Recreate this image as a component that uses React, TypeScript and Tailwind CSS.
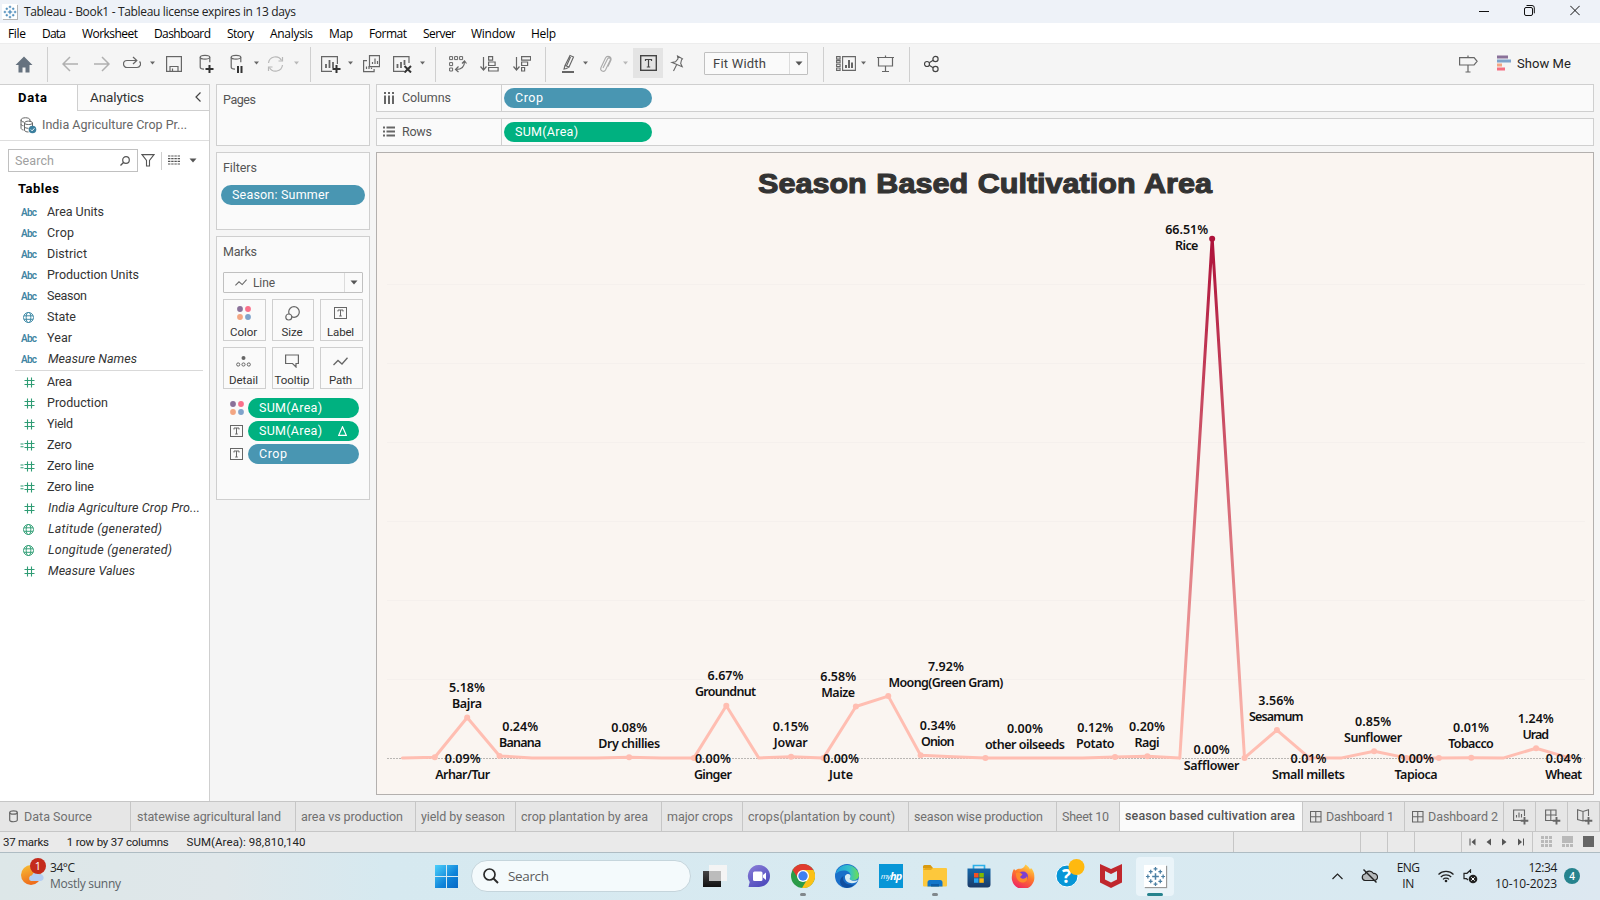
import { useLayoutEffect, useRef, useState, type ReactNode } from "react";

/* Single-line text tracked so that it spans an exact width. */
function Fit({ w, children, className = "" }: { w: number; children: string; className?: string }) {
  const ref = useRef<HTMLSpanElement>(null);
  const [tracking, setTracking] = useState(0);
  useLayoutEffect(() => {
    const el = ref.current;
    if (!el) return;
    el.style.letterSpacing = "0px";
    const natural = el.getBoundingClientRect().width;
    const next = (w - natural) / Math.max(1, children.length - 1);
    el.style.letterSpacing = next + "px";
    setTracking(next);
  }, [w, children]);
  return (
    <span ref={ref} className={"block w-max shrink-0 whitespace-nowrap " + className} style={{ letterSpacing: tracking }}>
      {children}
    </span>
  );
}

function Svg({ w, h = 19, className = "", children }: { w: number; h?: number; className?: string; children: ReactNode }) {
  return (
    <svg width={w} height={h} viewBox={`0 0 ${w} ${h}`} fill="none" stroke="#666" strokeWidth={1.2} className={"block shrink-0 " + className}>
      {children}
    </svg>
  );
}

const Caret = ({ className = "", fill = "#666" }: { className?: string; fill?: string }) => (
  <Svg w={5} h={4} className={className}>
    <path d="M0 0.5h5L2.5 3.5z" fill={fill} stroke="none" />
  </Svg>
);
const BigCaret = ({ className = "" }: { className?: string }) => (
  <Svg w={8} h={5} className={className}>
    <path d="M0.5 0.5h7L4 4.5z" fill="#555" stroke="none" />
  </Svg>
);
const Sep = ({ className = "" }: { className?: string }) => <div className={"mt-[3px] h-[35px] w-px shrink-0 bg-[#cfcfcf] " + className} />;

function TableauMark({ size, color = "#4a87b5" }: { size: number; color?: string }) {
  return (
    <svg width={size} height={size} viewBox="0 0 22 22" fill="none" stroke={color} strokeWidth="1.3" className="block">
      <path d="M11 7.5v7M7.500 11h7" strokeWidth="1.600" />
      <path d="M11 1v4M9 3h4M11 17v4M9 19h4M3 9v4M1 11h4M19 9v4M17 11h4" />
      <path d="M6 4v4M4 6h4M16 4v4M14 6h4M6 14v4M4 16h4M16 14v4M14 16h4" />
    </svg>
  );
}

function TitleBar() {
  return (
    <div className="flex h-[23px] shrink-0 items-center bg-[#eef2f8]">
      <div className="ml-[2px] flex h-[15px] w-[15px] items-center justify-center bg-white shadow-[1px_1px_0_#b5b5b5]">
        <TableauMark size={14} color="#2f78b0" />
      </div>
      <Fit w={272} className="mt-px ml-[7px] font-[Open_Sans,sans-serif] text-[12px] leading-[14px] text-[#222]">
        Tableau - Book1 - Tableau license expires in 13 days
      </Fit>
      <div className="ml-auto flex pr-[20px] pb-[2px]">
        <Svg w={10} h={11} className="mr-[35px]"><path d="M0 6.500h10" stroke="#111" strokeWidth="1" /></Svg>
        <Svg w={11} h={11} className="mr-[35px]">
          <rect x="0.500" y="2.500" width="8" height="8" rx="1.500" stroke="#111" strokeWidth="1" />
          <path d="M2.500 0.500h5.500a2.300 2.300 0 0 1 2.300 2.300v5.500" stroke="#111" strokeWidth="1" />
        </Svg>
        <Svg w={10} h={11}><path d="M0.300 0.800l9.400 9.400M9.700 0.800L0.300 10.200" stroke="#111" strokeWidth="1" /></Svg>
      </div>
    </div>
  );
}

const MENU: [string, number, string][] = [
  ["File", 18, "w-[34px]"], ["Data", 24, "w-[40px]"], ["Worksheet", 56, "w-[72px]"], ["Dashboard", 57, "w-[73px]"],
  ["Story", 27, "w-[43px]"], ["Analysis", 43, "w-[59px]"], ["Map", 24, "w-[40px]"], ["Format", 38, "w-[54px]"],
  ["Server", 33, "w-[48px]"], ["Window", 44, "w-[60px]"], ["Help", 25, "w-[40px]"],
];

function MenuBar() {
  return (
    <div className="flex h-[20px] shrink-0 items-center bg-white pt-[2px] pl-[8px] font-[Open_Sans,sans-serif] text-[12px] leading-[16px] text-black">
      {MENU.map(([label, w, cell]) => (
        <div key={label} className={cell}><Fit w={w}>{label}</Fit></div>
      ))}
    </div>
  );
}

const Cylinder = () => (
  <>
    <ellipse cx="6" cy="4.200" rx="4.800" ry="1.900" />
    <path d="M1.200 4.200v10c0 1 1.500 1.800 3.800 1.900M10.800 4.200v5" />
  </>
);

function Toolbar() {
  return (
    <div className="flex h-[41px] shrink-0 items-center border-t border-[#ededed] bg-[#f5f5f5] pb-[2px]">
      <Svg w={18} className="ml-[15px]"><path d="M9 2.500L0.500 11h3v7.500h4v-5h3v5h4V11h3z" fill="#66727f" stroke="none" /></Svg>
      <Sep className="ml-[14px]" />
      <Svg w={16} className="ml-[14px]"><path d="M16 10H1M8 3L1 10l7 7" stroke="#b0b0b0" strokeWidth="1.500" /></Svg>
      <Svg w={16} className="ml-[16px]"><path d="M0 10h15M8 3l7 7-7 7" stroke="#b0b0b0" strokeWidth="1.500" /></Svg>
      <Svg w={18} className="ml-[13px]">
        <path d="M5.500 13.500H4a3.500 3.500 0 0 1 0-7H13M5.500 13.500H14a3.500 3.500 0 0 0 2.500-6" />
        <path d="M10 3l3.800 3.500L10 10" />
      </Svg>
      <Caret className="ml-[9px]" />
      <Svg w={16} className="ml-[11px]">
        <rect x="0.600" y="2.600" width="14.800" height="14.800" />
        <path d="M4 17.500v-5h8v5M6.500 17v-2.500" />
      </Svg>
      <Svg w={15} h={21} className="ml-[17px]"><Cylinder /><path d="M10.500 12v8M6.500 16h8" stroke="#333" strokeWidth="2" /></Svg>
      <Svg w={13} h={21} className="ml-[16px]"><Cylinder /><path d="M8 13v7M11.500 13v7" stroke="#333" strokeWidth="2" /></Svg>
      <Caret className="ml-[11px]" />
      <Svg w={17} className="ml-[8px]">
        <path d="M1.500 9A7 7 0 0 1 14.600 6.500M15.500 11A7 7 0 0 1 2.400 13.500" stroke="#b8b8b8" />
        <path d="M15.500 3v4h-4M1.500 17v-4h4" stroke="#b8b8b8" />
      </Svg>
      <Caret className="ml-[10px]" fill="#b8b8b8" />
      <Sep className="ml-[11px]" />
      <Svg w={20} className="ml-[10px]">
        <path d="M16.400 10V2.600H0.600v14.800H11" /><path d="M5 14V10M8.500 14V6M12 14V8" strokeWidth="1.800" />
        <path d="M15.500 11v8M11.500 15h8" stroke="#333" strokeWidth="2" />
      </Svg>
      <Caret className="ml-[7px]" />
      <Svg w={17} className="ml-[10px]">
        <path d="M6.500 1.600h10v11h-10zM4 6.600H0.600v11h10.500V15" />
        <path d="M9.500 10V8M12 10V4.500M14.500 10V7M3.500 15v-2.500M6 15v-3M8.500 15v-1.500" />
      </Svg>
      <Svg w={19} className="ml-[13px]">
        <path d="M16 9V2.600H0.600v14.800H11" /><path d="M4.500 14v-4M8 14V8M11.500 11V6" strokeWidth="1.800" />
        <path d="M11.500 12l6.500 6.500M18 12l-6.500 6.500" stroke="#333" strokeWidth="2" />
      </Svg>
      <Caret className="ml-[8px]" />
      <Sep className="ml-[10px]" />
      <Svg w={18} className="ml-[13px]">
        <path d="M0.600 2.600h3v3h-3zM5.600 2.600h3v3h-3zM10.600 2.600h3v3h-3zM0.600 8.600h3v3h-3zM0.600 14h3v3h-3z" strokeWidth="1" />
        <path d="M15.500 7.500c0 5-3 8-8.500 8M13 9.500l2.500-2.500L17.500 9.500M9.500 12.500L6.500 15.500 9.500 18" />
      </Svg>
      <Svg w={19} className="ml-[13px]">
        <path d="M3.500 3v13M0.500 12.500l3 3.500 3-3.500" /><path d="M8.600 2.600h4v3.500h-4zM8.600 8h6.500v3.500H8.600zM8.600 13.500h9.500v3.500H8.600z" />
      </Svg>
      <Svg w={18} className="ml-[14px]">
        <path d="M3.500 3v13M0.500 12.500l3 3.500 3-3.500" /><path d="M8.600 2.600h9v3.500h-9zM8.600 8h6v3.500H8.600zM8.600 13.500h3v3.500h-3z" />
      </Svg>
      <Sep className="ml-[14px]" />
      <Svg w={13} h={21} className="ml-[16px]">
        <path d="M8 2.500l3.500 1.500-4.500 10-4-1.500zM3 12.500L2 16l2.500-.5L7 14M8.500 4L4.500 13" strokeWidth="1.100" />
        <path d="M0 19h12" strokeWidth="2" />
      </Svg>
      <Caret className="ml-[8px]" />
      <Svg w={13} className="ml-[11px]">
        <path d="M4 14l4.500-9c1-2 3.500-1 2.800 1L6.500 16c-1.500 2.500-6 1-4.500-2.500L6.500 4c1.500-3 7-1.500 5.300 2.500L9 12.500" stroke="#aaa" strokeWidth="1.100" />
      </Svg>
      <Caret className="ml-[11px]" fill="#b8b8b8" />
      <div className="ml-[5px] flex h-[30px] w-[30px] shrink-0 items-center justify-center bg-[#e4e4e4]">
        <Svg w={17} h={16}>
          <rect x="0.700" y="0.700" width="15.600" height="14.600" stroke="#444" strokeWidth="1.400" />
          <path d="M5.500 6V4.500h6V6M8.500 4.500v7.500M6.800 12h3.400" stroke="#444" strokeWidth="1.200" />
        </Svg>
      </div>
      <Svg w={15} className="ml-[7px]">
        <path d="M7.500 2l5 2.800-1 1.200-.8 3.500 1.500 3.200L2 8.500l3.500-.7 2.500-3zM6.500 11l-3 6" strokeWidth="1.100" />
      </Svg>
      <div className="ml-[19px] flex h-[23px] w-[104px] shrink-0 items-center rounded-[1px] border border-[#c0c0c0] bg-[#fafafa]">
        <Fit w={53} className="mt-px ml-[8px] text-[13px] text-[#444]">Fit Width</Fit>
        <div className="ml-auto flex h-full w-[18px] items-center justify-center border-l border-[#dcdcdc]"><BigCaret /></div>
      </div>
      <Sep className="ml-[15px]" />
      <Svg w={20} className="ml-[12px]">
        <path d="M6.600 2.600h12.800v13.800H6.600zM0.600 2.600h3.500v2.500H0.600zM0.600 6.600h3.500v2.200H0.600zM0.600 10.300h3.500v2.200H0.600zM0.600 14h3.500v2.400H0.600z" strokeWidth="1.100" />
        <path d="M10 14v-3M13 14V6M16 14V8.500" strokeWidth="2" />
      </Svg>
      <Caret className="ml-[5px]" />
      <Svg w={17} className="ml-[11px]"><path d="M0 3.500h17M1.500 3.500v8.500h14V3.500M8.500 12v5.500M5 17.500h7M8.500 1.500v2" /></Svg>
      <Sep className="ml-[15px]" />
      <Svg w={15} className="ml-[14px]">
        <circle cx="3" cy="10" r="2.500" stroke="#444" /><circle cx="11.500" cy="5" r="2.600" stroke="#444" /><circle cx="11.500" cy="15" r="2.600" stroke="#444" />
        <path d="M5.200 8.700l4-2.400M5.200 11.300l4 2.400" stroke="#444" />
      </Svg>
      <Svg w={19} className="ml-auto"><path d="M0.600 3.600h14.500l3 3.700-3 3.700H0.600zM9 1.500v2M9 11v7M6.500 18h5" /></Svg>
      <Svg w={14} h={16} className="ml-[19px]">
        <g stroke="none"><rect y="0.500" width="11" height="3" fill="#8a7199" /><rect y="4.500" width="14" height="3" fill="#7fa3cb" /><rect y="8.500" width="5" height="3" fill="#f3a683" /><rect y="12.500" width="8" height="3" fill="#f66f81" /></g>
      </Svg>
      <Fit w={54} className="mt-px mr-[29px] ml-[6px] text-[13px] text-[#222]">Show Me</Fit>
    </div>
  );
}

const Globe = ({ c }: { c: string }) => (
  <Svg w={11} h={11}>
    <g stroke={c} strokeWidth="1"><circle cx="5.500" cy="5.500" r="5" /><ellipse cx="5.500" cy="5.500" rx="2.300" ry="5" /><path d="M1 3.800h9M1 7.300h9" /></g>
  </Svg>
);
const Hash = ({ eq = false }: { eq?: boolean }) => (
  <Svg w={15} h={11}>
    <g stroke="#2f9c74" strokeWidth="1.100"><path d="M7.500 0.500v10M11.500 0.500v10M4.500 3.500h10M4.500 7.500h10" />{eq && <path d="M0.500 4h3M0.500 6.800h3" />}</g>
  </Svg>
);

type Kind = "abc" | "geo" | "hash" | "calc" | "geom";
const DIMENSIONS: [Kind, string, number, boolean?][] = [
  ["abc", "Area Units", 57], ["abc", "Crop", 27], ["abc", "District", 40], ["abc", "Production Units", 92],
  ["abc", "Season", 40], ["geo", "State", 29], ["abc", "Year", 25], ["abc", "Measure Names", 89, true],
];
const MEASURES: [Kind, string, number, boolean?][] = [
  ["hash", "Area", 25], ["hash", "Production", 61], ["hash", "Yield", 26], ["calc", "Zero", 25], ["calc", "Zero line", 47],
  ["calc", "Zero line", 47], ["hash", "India Agriculture Crop Pro...", 152, true], ["geom", "Latitude (generated)", 114, true],
  ["geom", "Longitude (generated)", 124, true], ["hash", "Measure Values", 87, true],
];

function Field({ kind, name, w, italic }: { kind: Kind; name: string; w: number; italic?: boolean }) {
  return (
    <div className="flex h-[21px] items-center">
      <div className="flex w-[47px] shrink-0 items-center">
        {kind === "abc" && <Fit w={16} className="ml-[21px] text-[10px] font-semibold text-[#3f85a3]">Abc</Fit>}
        {kind === "geo" && <div className="ml-[23px]"><Globe c="#3f8aa6" /></div>}
        {kind === "geom" && <div className="ml-[23px]"><Globe c="#35a078" /></div>}
        {(kind === "hash" || kind === "calc") && <div className="ml-[20px]"><Hash eq={kind === "calc"} /></div>}
      </div>
      <Fit w={w} className={italic ? "ml-[1px] text-[12.5px] italic text-[#333]" : "text-[12.5px] text-[#333]"}>{name}</Fit>
    </div>
  );
}

function DataPane() {
  return (
    <div className="flex w-[210px] shrink-0 flex-col border-t border-r border-[#cfcfcf] bg-white">
      <div className="flex h-[26px] shrink-0">
        <div className="flex w-[77px] items-center pl-[18px]"><Fit w={29} className="text-[13px] font-bold text-black">Data</Fit></div>
        <div className="flex flex-1 items-center border-b border-l border-[#cfcfcf] bg-[#fafafa] pl-[12px]">
          <Fit w={54} className="text-[13.500px] text-[#333]">Analytics</Fit>
          <Svg w={6} h={10} className="mr-[8px] mb-[2px] ml-auto"><path d="M5.500 0.500L1 5l4.500 4.500" stroke="#444" /></Svg>
        </div>
      </div>
      <div className="flex h-[30px] shrink-0 items-center border-b border-[#dedede] pl-[20px]">
        <Svg w={17} h={17}>
          <path d="M1 3c0-3 9-3 9 0v2M1 3v8c0 1 1 1.800 2.500 2M1 3c0 1.500 2 2 3 2M1 7c0 1 1 1.500 2.500 1.800" strokeWidth="1" />
          <path d="M4.500 6c0-2.500 8-2.500 8 0v3M4.500 6v7c0 1.500 2 2 4 2M4.500 6c0 2 8 2 8 0M4.500 9.500c0 1.300 2 1.800 4 1.800" strokeWidth="1" />
          <circle cx="12.500" cy="12.500" r="3.800" fill="#3b7f9e" stroke="none" /><path d="M10.800 12.500l1.300 1.300 2.300-2.500" stroke="#fff" strokeWidth="1" />
        </Svg>
        <Fit w={145} className="ml-[5px] text-[12.5px] text-[#666]">India Agriculture Crop Pr...</Fit>
      </div>
      <div className="mt-[8px] ml-[8px] flex h-[23px] shrink-0 items-center">
        <div className="flex h-[23px] w-[130px] items-center border border-[#c0c0c0] pl-[6px]">
          <Fit w={39} className="mt-px text-[12.5px] text-[#a0a0a0]">Search</Fit>
          <Svg w={10} h={10} className="mr-[7px] ml-auto"><circle cx="6" cy="4" r="3.300" stroke="#555" /><path d="M3.700 6.300L0.500 9.500" stroke="#555" strokeWidth="1.300" /></Svg>
        </div>
        <Svg w={14} h={13} className="mb-px ml-[3px]"><path d="M1 0.600h12L8.500 6.500v5.500h-3V6.500z" stroke="#555" strokeWidth="1.100" /></Svg>
        <div className="ml-[6px] h-[18px] w-px bg-[#cfcfcf]" />
        <Svg w={12} h={10} className="mb-px ml-[6px]"><path d="M0 1h12M0 3.700h12M0 6.300h12M0 9h12" stroke="#555" strokeWidth="1.200" strokeDasharray="2.400 0.800" /></Svg>
        <BigCaret className="ml-[9px]" />
      </div>
      <div className="mt-[5px] mb-[2px] ml-[18px] flex h-[23px] shrink-0 items-center"><Fit w={41} className="text-[13px] font-bold text-black">Tables</Fit></div>
      {DIMENSIONS.map(([k, n, w, it]) => <Field key={n} kind={k} name={n} w={w} italic={it} />)}
      <div className="mr-[6px] ml-[15px] h-px shrink-0 bg-[#d9d9d9]" />
      <div className="h-px shrink-0" />
      {MEASURES.map(([k, n, w, it], i) => <Field key={n + i} kind={k} name={n} w={w} italic={it} />)}
    </div>
  );
}

const Dots = () => (
  <Svg w={14} h={14}>
    <g stroke="none"><circle cx="3" cy="3" r="2.900" fill="#8a7199" /><circle cx="11" cy="3" r="2.900" fill="#f9708a" /><circle cx="3" cy="11" r="2.900" fill="#f3a683" /><circle cx="11" cy="11" r="2.900" fill="#7fa3cb" /></g>
  </Svg>
);
const TextBox = () => (
  <Svg w={13} h={12}>
    <rect x="0.500" y="0.500" width="12" height="11" strokeWidth="1" /><path d="M4 4.500V3h5v1.500M6.500 3v6M5.200 9h2.600" strokeWidth="1" />
  </Svg>
);
const Zig = ({ w = 15 }: { w?: number }) => (
  <svg width={w} height={w * 0.6} viewBox="0 0 15 9" fill="none" stroke="#666" strokeWidth="1.300" className="block shrink-0"><path d="M0.500 8l4.500-4.500 4 3.500L14.500 0.800" /></svg>
);

function MarkButton({ icon, label, w, cell }: { icon: ReactNode; label: string; w: number; cell: string }) {
  return (
    <div className={"flex h-[42px] flex-col items-center border border-[#cfcfcf] pr-[2px] " + cell}>
      <div className="flex h-[26px] items-center justify-center">{icon}</div>
      <Fit w={w} className="text-[11.5px] leading-[13px] text-[#333]">{label}</Fit>
    </div>
  );
}

function Pill({ color, cell, label, w, delta = false }: { color: string; cell: string; label: string; w: number; delta?: boolean }) {
  return (
    <div className={`flex h-[20px] shrink-0 items-center rounded-full ${color} ${cell}`}>
      <Fit w={w} className="text-[12.5px] text-white">{label}</Fit>
      {delta && <Svg w={9} h={10} className="mr-[12px] ml-auto"><path d="M4.500 0.800L8.300 9.300H0.700z" stroke="#fff" /></Svg>}
    </div>
  );
}

const BLUE = "bg-[#4996b2]";
const GREEN = "bg-[#00b180]";

function Cards() {
  return (
    <div className="ml-[6px] flex w-[154px] shrink-0 flex-col">
      <div className="h-[62px] shrink-0 border border-[#cfcfcf] bg-[#fafafa] pt-[7px] pl-[6px]"><Fit w={33} className="text-[12.5px] leading-[15px] text-[#555]">Pages</Fit></div>
      <div className="mt-[6px] h-[78px] shrink-0 border border-[#cfcfcf] bg-[#fafafa] pt-[7px] pl-[4px]">
        <Fit w={34} className="ml-[2px] text-[12.5px] leading-[15px] text-[#555]">Filters</Fit>
        <div className="h-[10px]" />
        <Pill color={BLUE} cell="w-[144px] pl-[11px]" label="Season: Summer" w={97} />
      </div>
      <div className="mt-[6px] h-[264px] shrink-0 border border-[#cfcfcf] bg-[#fafafa] px-[6px] pt-[7px]">
        <Fit w={34} className="text-[12.5px] leading-[15px] text-[#555]">Marks</Fit>
        <div className="mt-[13px] flex h-[21px] items-center rounded-[1px] border border-[#c0c0c0] pl-[11px]">
          <Zig w={12} />
          <Fit w={22} className="mt-px ml-[6px] text-[12px] text-[#555]">Line</Fit>
          <div className="ml-auto flex h-full w-[18px] items-center justify-center border-l border-[#dcdcdc]"><BigCaret /></div>
        </div>
        <div className="mt-[6px] flex gap-[6px]">
          <MarkButton cell="w-[43px]" w={27} label="Color" icon={<Dots />} />
          <MarkButton cell="w-[42px]" w={21} label="Size" icon={<Svg w={15} h={15}><circle cx="9" cy="6" r="5.300" /><circle cx="3.800" cy="11" r="3" fill="#fafafa" /></Svg>} />
          <MarkButton cell="w-[43px]" w={27} label="Label" icon={<TextBox />} />
        </div>
        <div className="mt-[6px] flex gap-[6px]">
          <MarkButton cell="w-[43px]" w={29} label="Detail" icon={<Svg w={15} h={11}><circle cx="7.500" cy="2" r="2" fill="#666" stroke="none" /><circle cx="2.200" cy="8.500" r="1.600" strokeWidth="1" /><circle cx="7.500" cy="8.500" r="1.600" strokeWidth="1" /><circle cx="12.800" cy="8.500" r="1.600" strokeWidth="1" /></Svg>} />
          <MarkButton cell="w-[42px]" w={35} label="Tooltip" icon={<Svg w={14} h={14}><path d="M0.600 1h12.800v8.500H11V13L7.500 9.500H0.600z" /></Svg>} />
          <MarkButton cell="w-[43px]" w={23} label="Path" icon={<Zig />} />
        </div>
        <div className="mt-[9px] flex flex-col gap-[3px]">
          <div className="flex items-center pl-[7px]"><Dots /><Pill color={GREEN} cell="ml-[4px] w-[111px] pl-[11px]" label="SUM(Area)" w={63} /></div>
          <div className="flex items-center pl-[7px]"><TextBox /><Pill color={GREEN} cell="ml-[5px] w-[111px] pl-[11px]" label="SUM(Area)" w={63} delta /></div>
          <div className="flex items-center pl-[7px]"><TextBox /><Pill color={BLUE} cell="ml-[5px] w-[111px] pl-[11px]" label="Crop" w={28} /></div>
        </div>
      </div>
    </div>
  );
}

function Shelf({ icon, label, w, pill }: { icon: ReactNode; label: string; w: number; pill: ReactNode }) {
  return (
    <div className="flex h-[28px] shrink-0 items-center border border-[#cfcfcf] bg-[#fafafa]">
      <div className="flex h-full w-[125px] shrink-0 items-center border-r border-[#cfcfcf] pl-[6px]">
        {icon}
        <Fit w={w} className="ml-[7px] text-[12.5px] text-[#555]">{label}</Fit>
      </div>
      <div className="pl-[2px]">{pill}</div>
    </div>
  );
}

/* Percent of total area per crop, in axis order. */
const VALUES = [0, 0.09, 5.18, 0.24, 0, 0, 0, 0.08, 0, 0, 6.67, 0, 0.15, 0, 6.58, 7.92, 0.34, 0.15, 0, 0, 0, 0, 0.12, 0.2, 0, 66.51, 0, 3.56, 0.01, 0, 0.85, 0, 0, 0.01, 0, 1.24, 0.04];
const DOTTED = [1, 2, 3, 7, 9, 10, 12, 13, 14, 15, 16, 18, 22, 23, 25, 26, 27, 28, 30, 31, 32, 33, 35, 36];
const px = (i: number) => 402.4 + i * 32.39;
const py = (v: number) => 757.9 - v * 7.806;
const path = (a: number, b: number) => VALUES.slice(a, b + 1).map((v, i) => `${px(a + i).toFixed(1)},${py(v).toFixed(1)}`).join(" ");

const LABELS: [number, number, string, number, string][] = [
  [462.7, 758.7, "0.09%", 55, "Arhar/Tur"], [467, 687.7, "5.18%", 30, "Bajra"], [520.2, 726.7, "0.24%", 42.4, "Banana"],
  [629.2, 727.7, "0.08%", 62, "Dry chillies"], [712.9, 758.7, "0.00%", 38, "Ginger"], [725.5, 675.7, "6.67%", 61, "Groundnut"],
  [790.8, 726.7, "0.15%", 34, "Jowar"], [841, 758.7, "0.00%", 24, "Jute"], [838.2, 676.7, "6.58%", 34, "Maize"],
  [945.9, 666.7, "7.92%", 115, "Moong(Green Gram)"], [937.8, 725.7, "0.34%", 33.5, "Onion"], [1024.9, 728.4, "0.00%", 80, "other oilseeds"],
  [1095.3, 727.7, "0.12%", 38.5, "Potato"], [1147, 726.7, "0.20%", 25, "Ragi"], [1186.7, 229.7, "66.51%", 23.5, "Rice"],
  [1211.6, 749.7, "0.00%", 55.5, "Safflower"], [1276.3, 700.7, "3.56%", 54.5, "Sesamum"], [1308.5, 758.7, "0.01%", 73, "Small millets"],
  [1373.1, 721.7, "0.85%", 58, "Sunflower"], [1416, 758.7, "0.00%", 43, "Tapioca"], [1471, 727.7, "0.01%", 45.5, "Tobacco"],
  [1535.8, 718.7, "1.24%", 26.5, "Urad"], [1563.7, 758.7, "0.04%", 37, "Wheat"],
];

function Chart() {
  return (
    <svg width="1216" height="641" viewBox="377 153 1216 641" className="block">
      <defs>
        <linearGradient id="peak" gradientUnits="userSpaceOnUse" x1="0" x2="0" y1="758" y2="239">
          <stop offset="0" stopColor="#ffbeb2" /><stop offset="1" stopColor="#ae123a" />
        </linearGradient>
      </defs>
      <text x="758" y="192.500" textLength="454" lengthAdjust="spacingAndGlyphs" fontFamily="'Liberation Sans', Arial, sans-serif" fontWeight="700" fontSize="27.500" wordSpacing="1" fill="#333" stroke="#333" strokeWidth="1.100">
        Season Based Cultivation Area
      </text>
      {[284.5, 363.5, 442.5, 521.5, 600.5, 679.5].map((y) => <path key={y} d={`M387 ${y}H1585`} stroke="#f5f0ed" />)}
      <path d="M387 758.500H1585" stroke="#b9b6b3" strokeDasharray="2 1" />
      <g fill="none" strokeWidth="3" strokeLinejoin="round" strokeLinecap="round">
        <polyline points={path(0, 24)} stroke="#ffbeb2" />
        <polyline points={path(26, 36)} stroke="#ffbeb2" />
        <polyline points={path(24, 26)} stroke="url(#peak)" />
      </g>
      {DOTTED.map((i) => <circle key={i} cx={px(i)} cy={py(VALUES[i])} r="3" fill={i === 25 ? "#ae123a" : "#ffbeb2"} />)}
      <g fontFamily="'Noto Sans', sans-serif" fontWeight="600" fontSize="12.5" fill="#111" textAnchor="middle">
        {LABELS.map(([x, y, value, w, name]) => (
          <g key={name}>
            <text x={x} y={y + 4.3} textLength={value.length === 6 ? 43 : 36}>{value}</text>
            <text x={x} y={y + 20.3} textLength={w}>{name}</text>
          </g>
        ))}
      </g>
    </svg>
  );
}

function Sheet() {
  return (
    <div className="ml-[6px] flex w-[1218px] shrink-0 flex-col">
      <Shelf label="Columns" w={49} icon={<Svg w={12} h={12}><path d="M2 0v2M6 0v2M10 0v2M2 3.500v8.500M6 3.500v8.500M10 3.500v8.500" strokeWidth="2" /></Svg>} pill={<Pill color={BLUE} cell="w-[148px] pl-[11px]" label="Crop" w={28} />} />
      <div className="h-[6px] shrink-0" />
      <Shelf label="Rows" w={30} icon={<Svg w={12} h={11} className="mb-[2px]"><path d="M0 1.500h2M0 5.500h2M0 9.500h2M3.500 1.500H12M3.500 5.500H12M3.500 9.500H12" strokeWidth="2" /></Svg>} pill={<Pill color={GREEN} cell="w-[148px] pl-[11px]" label="SUM(Area)" w={63} />} />
      <div className="mt-[6px] flex h-[643px] shrink-0 flex-col border border-[#b3b0ae] bg-[#faf5f1]">
        <Chart />
      </div>
    </div>
  );
}

const TABS: [string, string, number][] = [
  ["w-[165px] pl-[6px]", "statewise agricultural land", 144], ["w-[120px] pl-[5px]", "area vs production", 102],
  ["w-[100px] pl-[5px]", "yield by season", 84], ["w-[146px] pl-[5px]", "crop plantation by area", 127],
  ["w-[81px] pl-[5px]", "major crops", 66], ["w-[166px] pl-[5px]", "crops(plantation by count)", 147],
  ["w-[148px] pl-[5px]", "season wise production", 129], ["w-[63px] pl-[5px]", "Sheet 10", 47],
];
const GridIcon = () => <Svg w={12} h={12}><path d="M0.500 0.500h10.500v10.500H0.500zM5.750 0.500v10.500M0.500 5.750h10.500" strokeWidth="1.100" /></Svg>;

function SheetTabs() {
  return (
    <div className="flex h-[31px] shrink-0 items-stretch border-y border-[#c6c6c6] bg-[#e6e6e6] text-[12.5px] text-[#707070]">
      <div className="flex w-[131px] shrink-0 items-center border-r border-[#c6c6c6] pl-[9px]">
        <Svg w={9} h={13}><ellipse cx="4.500" cy="2.500" rx="3.800" ry="1.700" /><path d="M0.700 2.500v7.500c0 2.300 7.600 2.300 7.600 0V2.500" /></Svg>
        <Fit w={68} className="mt-[2px] ml-[6px]">Data Source</Fit>
      </div>
      {TABS.map(([cell, label, w]) => (
        <div key={label} className={"flex shrink-0 items-center border-r border-[#c6c6c6] " + cell}><Fit w={w} className="mt-[2px]">{label}</Fit></div>
      ))}
      <div className="flex w-[183px] shrink-0 items-center border-r border-[#c6c6c6] bg-[#fafafa] pl-[5px]"><Fit w={170} className="font-medium text-[#555]">season based cultivation area</Fit></div>
      <div className="flex w-[102px] shrink-0 items-center border-r border-[#c6c6c6] pl-[7px]"><GridIcon /><Fit w={68} className="mt-[2px] ml-[4px]">Dashboard 1</Fit></div>
      <div className="flex w-[99px] shrink-0 items-center border-r border-[#c6c6c6] pl-[7px]"><GridIcon /><Fit w={70} className="mt-[2px] ml-[4px]">Dashboard 2</Fit></div>
      <div className="flex w-[32px] shrink-0 items-center border-r border-[#c6c6c6] pl-[9px]">
        <Svg w={16} h={16}><path d="M11.500 7V1H0.600v10.500H8M3.500 8.500V6M6 8.500V3.500M8.500 8.500V5" strokeWidth="1.100" /><path d="M11.500 8v7.500M7.700 11.700h7.600" strokeWidth="1.900" /></Svg>
      </div>
      <div className="flex w-[32px] shrink-0 items-center border-r border-[#c6c6c6] pl-[9px]">
        <Svg w={16} h={16}><path d="M11 7V1H0.600v10.500H8M5.800 1v10.500M0.600 6h10.400" strokeWidth="1.100" /><path d="M11.500 8v7.500M7.700 11.700h7.600" strokeWidth="1.900" /></Svg>
      </div>
      <div className="flex flex-1 items-center border-r border-[#c6c6c6] pl-[9px]">
        <Svg w={16} h={16}><path d="M11.500 7V0.800L6 2.500 0.600 0.800v9.700L6 12l2-.5M6 2.500V12" strokeWidth="1.100" /><path d="M11.500 8v7.500M7.700 11.700h7.600" strokeWidth="1.900" /></Svg>
      </div>
    </div>
  );
}

function StatusBar() {
  return (
    <div className="flex h-[21px] shrink-0 items-stretch border-b border-[#aebcc3] bg-[#eaeaea] text-[11.5px] text-[#222]">
      <div className="flex items-center pt-[2px] pl-[3px]">
        <Fit w={46}>37 marks</Fit>
        <Fit w={102} className="ml-[18px]">1 row by 37 columns</Fit>
        <Fit w={119} className="ml-[18px]">SUM(Area): 98,810,140</Fit>
      </div>
      <div className="ml-auto w-[127px] border-l border-[#c6c6c6]" />
      <div className="w-[27px] border-l border-[#c6c6c6]" />
      <div className="w-[27px] border-l border-[#c6c6c6]" />
      <div className="w-[47px] border-l border-[#c6c6c6]" />
      <div className="flex w-[71px] items-center border-l border-[#c6c6c6] pl-[7px]">
        <Svg w={56} h={8}>
          <g fill="#555" stroke="none"><path d="M0.500 0.500h1v7h-1zM6.500 0.500v7L2.500 4zM22 0.500v7L17.500 4zM33 0.500v7L37.500 4zM49 0.500v7L53 4zM54 0.500h1v7h-1z" /></g>
        </Svg>
      </div>
      <div className="flex w-[68px] items-center gap-[10px] border-l border-[#c6c6c6] pb-px pl-[8px]">
        <Svg w={11} h={11}><path d="M0 1.500h11M0 5.500h11M0 9.500h11" stroke="#b9b9b9" strokeWidth="3" strokeDasharray="3 1" /></Svg>
        <Svg w={11} h={11}><path d="M0 3.500h11" stroke="#b9b9b9" strokeWidth="7" /><path d="M0 9.500h11" stroke="#b9b9b9" strokeWidth="3" strokeDasharray="3 1" /></Svg>
        <div className="h-[11px] w-[11px] bg-[#666]" />
      </div>
    </div>
  );
}

function TaskIcon({ children, running = false }: { children: ReactNode; running?: boolean }) {
  return (
    <div className="relative flex h-full w-[44px] shrink-0 items-center justify-center">
      {children}
      {running && <div className="absolute bottom-[3px] h-[3px] w-[6px] rounded-full bg-[#80878b]" />}
    </div>
  );
}

function Taskbar() {
  return (
    <div className="flex h-[48px] shrink-0 items-center bg-[linear-gradient(90deg,#dde7e8_0%,#dfe7ea_14%,#d6e9f0_24%,#d8eaf1_60%,#d9e9f1_88%,#dde8f1_100%)] pb-[2px] font-[Open_Sans,sans-serif]">
      <svg width="26" height="30" viewBox="20 857 26 30" className="mb-[8px] ml-[20px] block shrink-0">
        <defs><linearGradient id="sun" x1="0" y1="0" x2="0.300" y2="1"><stop offset="0" stopColor="#f8c136" /><stop offset="1" stopColor="#ee6d1b" /></linearGradient></defs>
        <circle cx="31" cy="875" r="10" fill="url(#sun)" />
        <path d="M31 881a3 3 0 0 1 1-5.800 4 4 0 0 1 7-1 3.500 3.500 0 0 1 2 6.800z" fill="#b3cdf3" />
        <circle cx="38" cy="866" r="8" fill="#c42b1c" />
        <text x="38" y="870" fontSize="11" fill="#fff" textAnchor="middle" fontFamily="'Open Sans'">1</text>
      </svg>
      <div className="ml-[4px] flex w-[385px] shrink-0 flex-col text-[12px] leading-[16px]">
        <Fit w={25} className="text-[#222]">34°C</Fit>
        <Fit w={71} className="text-[#5a6266]">Mostly sunny</Fit>
      </div>
      <svg width="23" height="23" viewBox="0 0 23 23" className="block shrink-0">
        <defs><linearGradient id="win" x1="0" y1="0" x2="1" y2="1"><stop offset="0" stopColor="#4cd0fb" /><stop offset="0.600" stopColor="#0e83d9" /><stop offset="1" stopColor="#0767c4" /></linearGradient></defs>
        <path d="M0 0h11v11H0zM12 0h11v11H12zM0 12h11v11H0zM12 12h11v11H12z" fill="url(#win)" />
      </svg>
      <div className="ml-[13px] flex h-[32px] w-[220px] shrink-0 items-center rounded-full border border-[#c5d5dc] bg-[#f4fafc] pl-[11px]">
        <Svg w={16} h={16}><circle cx="6.500" cy="6.500" r="5.500" stroke="#2b2b2b" strokeWidth="1.700" /><path d="M10.500 10.500l4.500 4.500" stroke="#2b2b2b" strokeWidth="1.900" /></Svg>
        <Fit w={41} className="ml-[9px] text-[13.500px] text-[#5c5c5c]">Search</Fit>
      </div>
      <div className="ml-[2px] flex h-full items-center">
        <TaskIcon>
          <svg width="24" height="24" viewBox="0 0 24 24">
            <defs><linearGradient id="tv" x1="0" y1="0" x2="0" y2="1"><stop offset="0" stopColor="#444" /><stop offset="1" stopColor="#111" /></linearGradient></defs>
            <rect x="0" y="7" width="18" height="16" fill="url(#tv)" /><rect x="6" y="1" width="18" height="16" fill="#f4f4f4" /><rect x="6" y="7" width="12" height="10" fill="#bcbcbc" />
          </svg>
        </TaskIcon>
        <TaskIcon>
          <svg width="24" height="24" viewBox="0 0 24 24">
            <defs><linearGradient id="chat" x1="0" y1="0" x2="0.600" y2="1"><stop offset="0" stopColor="#8b7fd8" /><stop offset="1" stopColor="#4f4bbd" /></linearGradient></defs>
            <path d="M12 1a11 11 0 1 1 0 22H1.500l1.200-5A11 11 0 0 1 12 1z" fill="url(#chat)" /><rect x="6" y="7.500" width="9.500" height="9.500" rx="1.500" fill="#fff" /><path d="M16 11l3-2.500v7.500l-3-2.500z" fill="#fff" />
          </svg>
        </TaskIcon>
        <TaskIcon running>
          <svg width="24" height="24" viewBox="0 0 24 24">
            <circle cx="12" cy="12" r="12" fill="#2b9c48" /><path d="M1.600 6A12 12 0 0 1 22.400 6H12L7 14z" fill="#e03b2f" /><path d="M22.400 6A12 12 0 0 1 11 24l6-10-5-8z" fill="#fbc116" />
            <circle cx="12" cy="12" r="6" fill="#fff" /><circle cx="12" cy="12" r="4.700" fill="#3f7ff0" />
          </svg>
        </TaskIcon>
        <TaskIcon>
          <svg width="24" height="24" viewBox="0 0 24 24">
            <defs><linearGradient id="ed" x1="0" y1="0.300" x2="1" y2="0.300"><stop offset="0" stopColor="#1f9fe0" /><stop offset="0.600" stopColor="#35c1c8" /><stop offset="1" stopColor="#6fe04e" /></linearGradient></defs>
            <circle cx="12" cy="12" r="12" fill="#1a6fc9" /><path d="M0.500 10A12 12 0 0 1 24 11c0 5-6 6.500-9 4.500-1-1 .5-1.500.5-4C15.500 6 6 4.500 0.500 10z" fill="url(#ed)" />
            <path d="M8.500 12c-2 5 3 10 11 8.500A12 12 0 0 1 12 24C4 23 3 15 8.500 12z" fill="#114f9f" /><path d="M10 12c1.500-3 5.500-2.500 5.500 0 0 2-1.500 2.500-.5 3.500 2 1.800 6 1.500 8 .5-2 5-14 4.500-13-4z" fill="#d9ebf2" />
          </svg>
        </TaskIcon>
        <TaskIcon>
          <div className="flex h-[24px] w-[24px] items-center justify-center bg-[#0796d7] text-[8px] italic text-white"><span className="tracking-[-0.7px]">my</span><b className="text-[11px] tracking-[-1px]">hp</b></div>
        </TaskIcon>
        <TaskIcon running>
          <svg width="24" height="24" viewBox="0 0 24 24">
            <path d="M0 2.500a1.500 1.500 0 0 1 1.500-1.500h6l2.500 3v3H0z" fill="#d99a10" /><rect y="4" width="24" height="18.500" rx="1" fill="#fdc83c" /><path d="M0 6h8l2-2h-8z" fill="#e8aa1c" /><path d="M4.500 22.500v-4a2.500 2.500 0 0 1 2.500-2.500h10a2.500 2.500 0 0 1 2.500 2.500v4z" fill="#1276c9" /><path d="M8 20h8v2.500H8z" fill="#0b5ca5" />
          </svg>
        </TaskIcon>
        <TaskIcon>
          <svg width="24" height="24" viewBox="0 0 24 24">
            <defs><linearGradient id="st" x1="0" y1="0" x2="0" y2="1"><stop offset="0" stopColor="#1468ac" /><stop offset="1" stopColor="#1b3a66" /></linearGradient></defs>
            <path d="M6.500 6V1.500h11V6" fill="none" stroke="#2cb1ea" strokeWidth="1.700" /><path d="M0.500 4.500h23v16a3 3 0 0 1-3 3h-17a3 3 0 0 1-3-3z" fill="url(#st)" />
            <rect x="7" y="9" width="4.500" height="4.500" fill="#f25022" /><rect x="12.300" y="9" width="4.500" height="4.500" fill="#7fba00" /><rect x="7" y="14.300" width="4.500" height="4.500" fill="#29a4ef" /><rect x="12.300" y="14.300" width="4.500" height="4.500" fill="#fdb813" />
          </svg>
        </TaskIcon>
        <TaskIcon>
          <svg width="24" height="24" viewBox="0 0 24 24">
            <defs><linearGradient id="ff" x1="0.800" y1="0" x2="0.300" y2="1"><stop offset="0" stopColor="#ffe14a" /><stop offset="0.450" stopColor="#ff7a2a" /><stop offset="1" stopColor="#ef2263" /></linearGradient></defs>
            <path d="M3 5l1.500 1.500C6 5 8 4.500 9 4.800 11 5 13 4 14.500 0.500c2.500 1.500 4 3.500 4.500 5l1-1.500c2 2 3.500 5 3.300 8.500A11.300 11.300 0 1 1 1 11.500C1 9 2 6.500 3 5z" fill="url(#ff)" />
            <circle cx="12" cy="12.500" r="5" fill="#7d3fd0" /><path d="M5 9c3-1 5 0 6.500 1.500L9 13c2 3 6 2 7-1 1.500 4-2 7-5 6.500-4-.5-6.500-5-6-9.500z" fill="#ff8a2b" />
          </svg>
        </TaskIcon>
        <TaskIcon>
          <svg width="30" height="30" viewBox="0 0 30 30" className="mb-[4px] ml-[5px]">
            <circle cx="12" cy="17" r="11" fill="#0796d7" stroke="#fff" strokeWidth="1" /><text x="11.500" y="24" textAnchor="middle" fontSize="19" fontWeight="700" fill="#fff" fontFamily="'Open Sans'">?</text><circle cx="21.500" cy="8" r="8" fill="#ffb90f" />
          </svg>
        </TaskIcon>
        <TaskIcon>
          <svg width="22" height="24" viewBox="0 0 22 24"><path d="M0 0l11 5L22 0v18.500L11 24 0 18.500z" fill="#c0272d" /><path d="M5 7l6 3 6-3v8.500L11 18.500 5 15.500z" fill="#d8eaf1" /></svg>
        </TaskIcon>
        <div className="relative ml-[3px] flex h-[39px] w-[38px] shrink-0 items-center justify-center rounded-[4px] bg-[#eaf4f9]">
          <div className="flex h-[22px] w-[22px] items-center justify-center bg-white shadow-[1px_1px_1px_#999]"><TableauMark size={21} color="#4b7fa3" /></div>
          <div className="absolute bottom-0 h-[3px] w-[16px] rounded-full bg-[#26838e]" />
        </div>
      </div>
      <div className="ml-auto flex items-center text-[12px] leading-[16px] text-[#1b1b1b]">
        <Svg w={11} h={7}><path d="M0.500 6L5.500 1l5 5" stroke="#222" /></Svg>
        <Svg w={17} h={14} className="ml-[18px]">
          <path d="M4 11.500a3.300 3.300 0 0 1 0-6.500A4.800 4.800 0 0 1 12.500 4.500a3.500 3.500 0 0 1 1 7z" fill="#b5b9bb" stroke="#222" /><path d="M2.500 0.500l13 13" stroke="#222" strokeWidth="1.400" />
        </Svg>
        <div className="ml-[18px] flex w-[24px] flex-col items-center"><Fit w={23}>ENG</Fit><Fit w={12}>IN</Fit></div>
        <Svg w={16} h={13} className="ml-[18px]">
          <path d="M0.500 4.500a10.500 10.500 0 0 1 15 0M2.800 7a7.300 7.300 0 0 1 10.400 0M5 9.300a4.200 4.200 0 0 1 6 0" stroke="#222" /><circle cx="8" cy="11" r="1.300" fill="#222" stroke="none" />
        </Svg>
        <Svg w={15} h={15} className="ml-[9px]">
          <path d="M7.500 4V1L4 4.300H1v5.400h2.500L5 11" stroke="#222" /><circle cx="10" cy="10" r="4.300" fill="#222" stroke="none" /><path d="M8.300 8.300l3.400 3.400M11.700 8.300l-3.400 3.400" stroke="#fff" strokeWidth="1" />
        </Svg>
        <div className="ml-[10px] flex w-[69px] flex-col items-end"><Fit w={29}>12:34</Fit><Fit w={62}>10-10-2023</Fit></div>
        <div className="mr-[20px] ml-[7px] flex h-[16px] w-[16px] items-center justify-center rounded-full bg-[#26838e] text-[10px] font-semibold text-white">4</div>
      </div>
    </div>
  );
}

export default function App() {
  return (
    <div className="flex h-[900px] w-[1600px] flex-col overflow-hidden bg-[#f5f5f5] font-[Roboto,sans-serif]">
      <TitleBar />
      <MenuBar />
      <Toolbar />
      <div className="flex h-[717px] shrink-0">
        <DataPane />
        <Cards />
        <Sheet />
      </div>
      <SheetTabs />
      <StatusBar />
      <Taskbar />
    </div>
  );
}
